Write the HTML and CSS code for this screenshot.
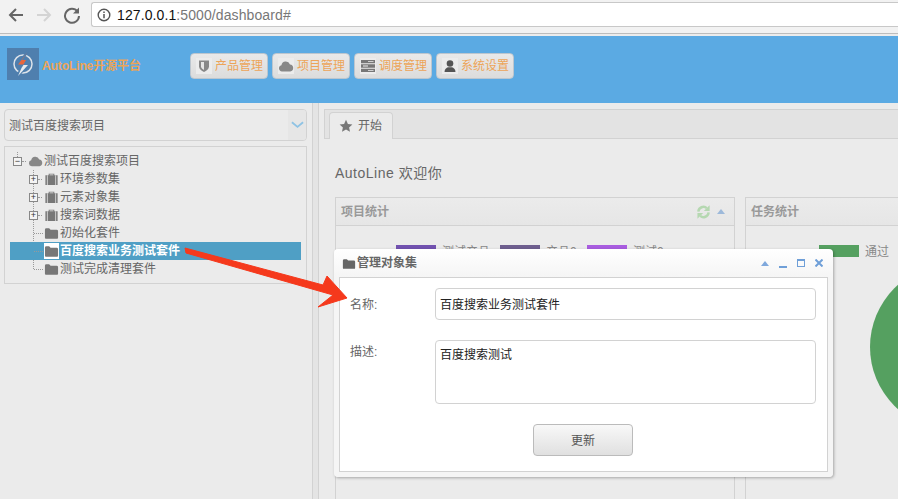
FILE: index.html
```html
<!DOCTYPE html>
<html lang="en">
<head>
    <meta charset="UTF-8">
    <meta name="viewport" content="width=device-width, initial-scale=1.0">
    <title>AutoLine</title>
    <link rel="stylesheet" href="styles.css">
</head>
<body>
    <div class="browser-bar">
        <svg class="nav-icon" viewBox="0 0 18 18"><path d="M16 9H3M9 3L3 9l6 6" fill="none" stroke="#666" stroke-width="2"/></svg>
        <svg class="nav-icon" viewBox="0 0 18 18"><path d="M2 9h13M9 3l6 6-6 6" fill="none" stroke="#d4d4d4" stroke-width="2"/></svg>
        <svg class="nav-icon" viewBox="0 0 18 18"><path d="M14.500 5.500A7 7 0 1 0 16 10" fill="none" stroke="#666" stroke-width="2"/><path d="M16 1.500v6h-6z" fill="#666"/></svg>
        <div class="address">
            <svg class="info-icon" viewBox="0 0 14 14"><circle cx="7" cy="7" r="5.800" fill="none" stroke="#555" stroke-width="1.400"/><path d="M7 6v4.200M7 3.500v1.400" stroke="#555" stroke-width="1.500"/></svg>
            <span class="host">127.0.0.1</span><span class="path">:5000/dashboard#</span>
        </div>
    </div>

    <header class="top-bar">
        <div class="logo">
            <svg viewBox="0 0 32 32" width="32" height="32"><circle cx="16" cy="16" r="9" fill="none" stroke="#dde3ea" stroke-width="1.500"/><path d="M21 3L10 17h6l3-5h-4z" fill="#4f7fae" stroke="#4f7fae" stroke-width="2"/><path d="M16 16h6L10 29l4-9z" fill="#4f7fae" stroke="#4f7fae" stroke-width="2"/><path d="M20.500 4L11 16.500h5.500l2.500-4.500h-4z" fill="#e8663c"/><path d="M16.500 17H21L11 28l3.500-8z" fill="#e6ebf0"/></svg>
        </div>
        <div class="brand">AutoLine开源平台</div>
        <nav class="menu">
            <a class="menu-btn" href="#"><span class="menu-icon"><svg viewBox="0 0 14 14" width="14" height="14"><path d="M2 1.500h10v6c0 2.500-2.500 4.500-5 5.500-2.500-1-5-3-5-5.500z" fill="#888"/><path d="M7 3v8c-1.500-.7-3-2-3-3.700V3z" fill="#e6e6e6"/></svg></span><span class="txt">产品管理</span></a>
            <a class="menu-btn" href="#"><span class="menu-icon"><svg viewBox="0 0 16 14" width="16" height="14"><path d="M4 12.500a3.200 3.200 0 0 1-.6-6.300A4.500 4.500 0 0 1 12 5.400a3.600 3.600 0 0 1 .3 7.100z" fill="#888"/></svg></span><span class="txt">项目管理</span></a>
            <a class="menu-btn" href="#"><span class="menu-icon"><svg viewBox="0 0 14 14" width="14" height="14"><path d="M0 1h14v3.300H0zM0 5.300h14v3.400H0zM0 9.700h14V13H0z" fill="#777"/><path d="M7 2.300h5.500v.8H7zM2 6.600h5v.8H2zM7 11h5.500v.8H7z" fill="#eee"/></svg></span><span class="txt">调度管理</span></a>
            <a class="menu-btn" href="#"><span class="menu-icon"><svg viewBox="0 0 14 14" width="14" height="14"><circle cx="7" cy="4.500" r="3.300" fill="#555"/><path d="M1.500 13c0-3 2-4.500 3.500-4.800h4c1.500.3 3.500 1.800 3.500 4.800z" fill="#555"/></svg></span><span class="txt">系统设置</span></a>
        </nav>
    </header>

    <div class="workspace">
        <aside class="sidebar">
            <div class="project-select">
                <span class="project-name">测试百度搜索项目</span>
                <span class="select-arrow"><svg viewBox="0 0 14 8" width="13" height="8"><path d="M1 1l6 5 6-5" fill="none" stroke="#8fc3e4" stroke-width="2"/></svg></span>
            </div>
            <div class="tree">
                <div class="tree-row root">
                    <span class="toggle open">−</span><span class="dots"></span>
                    <svg class="tree-icon" viewBox="0 0 16 14"><path d="M4 12.500a3.200 3.200 0 0 1-.6-6.300A4.500 4.500 0 0 1 12 5.400a3.600 3.600 0 0 1 .3 7.100z" fill="#888"/></svg>
                    <span class="txt">测试百度搜索项目</span>
                </div>
                <div class="tree-children">
                    <div class="tree-row">
                        <span class="toggle">+</span><span class="dots"></span>
                        <svg class="tree-icon" viewBox="0 0 16 14"><path d="M5 3V1.500h6V3h3.500v10.500h-13V3zM6 3h4V2.300H6z" fill="#777" fill-rule="evenodd"/><path d="M3.600 3v10.500M12.400 3v10.500" stroke="#ebebeb" stroke-width=".8"/></svg>
                        <span class="txt">环境参数集</span>
                    </div>
                    <div class="tree-row">
                        <span class="toggle">+</span><span class="dots"></span>
                        <svg class="tree-icon" viewBox="0 0 16 14"><path d="M5 3V1.500h6V3h3.500v10.500h-13V3zM6 3h4V2.300H6z" fill="#777" fill-rule="evenodd"/><path d="M3.600 3v10.500M12.400 3v10.500" stroke="#ebebeb" stroke-width=".8"/></svg>
                        <span class="txt">元素对象集</span>
                    </div>
                    <div class="tree-row">
                        <span class="toggle">+</span><span class="dots"></span>
                        <svg class="tree-icon" viewBox="0 0 16 14"><path d="M5 3V1.500h6V3h3.500v10.500h-13V3zM6 3h4V2.300H6z" fill="#777" fill-rule="evenodd"/><path d="M3.600 3v10.500M12.400 3v10.500" stroke="#ebebeb" stroke-width=".8"/></svg>
                        <span class="txt">搜索词数据</span>
                    </div>
                    <div class="tree-row leaf">
                        <span class="dots"></span>
                        <svg class="tree-icon" viewBox="0 0 16 14"><path d="M1 3.500A1.500 1.500 0 0 1 2.500 2h3L7 3.500h6.500A1.500 1.500 0 0 1 15 5v7a1 1 0 0 1-1 1H2a1 1 0 0 1-1-1z" fill="#777"/></svg>
                        <span class="txt">初始化套件</span>
                    </div>
                    <div class="tree-row leaf selected">
                        <span class="dots"></span>
                        <span class="icon-box"><svg class="tree-icon" viewBox="0 0 16 14"><path d="M1 3.500A1.500 1.500 0 0 1 2.500 2h3L7 3.500h6.500A1.500 1.500 0 0 1 15 5v7a1 1 0 0 1-1 1H2a1 1 0 0 1-1-1z" fill="#777"/></svg></span>
                        <span class="txt">百度搜索业务测试套件</span>
                    </div>
                    <div class="tree-row leaf">
                        <span class="dots"></span>
                        <svg class="tree-icon" viewBox="0 0 16 14"><path d="M1 3.500A1.500 1.500 0 0 1 2.500 2h3L7 3.500h6.500A1.500 1.500 0 0 1 15 5v7a1 1 0 0 1-1 1H2a1 1 0 0 1-1-1z" fill="#777"/></svg>
                        <span class="txt">测试完成清理套件</span>
                    </div>
                </div>
            </div>
        </aside>

        <div class="splitter"></div>

        <main class="content">
            <div class="tabs">
                <div class="tab">
                    <svg viewBox="0 0 14 14" width="14" height="14"><path d="M7 .8l1.900 4.100 4.500.5-3.300 3 .9 4.400L7 10.600l-4 2.200.9-4.400-3.300-3 4.500-.5z" fill="#777"/></svg>
                    <span class="txt">开始</span>
                </div>
            </div>
            <div class="tab-body">
                <h2 class="welcome">AutoLine 欢迎你</h2>
                <div class="panels">
                    <section class="panel stats-project">
                        <div class="panel-head">
                            <span class="txt">项目统计</span>
                            <span class="panel-tools">
                                <svg viewBox="0 0 16 16" width="15" height="16"><path d="M2.500 7.500A5.500 5.500 0 0 1 11.500 3.800" fill="none" stroke="#b5d8b1" stroke-width="2.600"/><path d="M14.500 .8v6.200H8.300z" fill="#b5d8b1"/><path d="M13.500 8.500A5.500 5.500 0 0 1 4.500 12.200" fill="none" stroke="#b5d8b1" stroke-width="2.600"/><path d="M1.500 15.200V9h6.200z" fill="#b5d8b1"/></svg>
                                <i class="caret-up"></i>
                            </span>
                        </div>
                        <div class="legend">
                            <i class="swatch purple"></i><span class="legend-text">测试产品</span>
                            <i class="swatch slate"></i><span class="legend-text short">产品0</span>
                            <i class="swatch violet"></i><span class="legend-text">测试0</span>
                        </div>
                    </section>
                    <section class="panel stats-task">
                        <div class="panel-head"><span class="txt">任务统计</span></div>
                        <div class="legend task-legend">
                            <i class="swatch green"></i><span class="legend-text">通过</span>
                        </div>
                        <div class="pie"></div>
                    </section>
                </div>
            </div>
        </main>
    </div>

    <div class="dialog">
        <div class="dialog-head">
            <svg viewBox="0 0 16 14" width="14" height="13"><path d="M1 3.500A1.500 1.500 0 0 1 2.500 2h3L7 3.500h6.500A1.500 1.500 0 0 1 15 5v7a1 1 0 0 1-1 1H2a1 1 0 0 1-1-1z" fill="#666"/></svg>
            <span class="dialog-title txt">管理对象集</span>
            <span class="dialog-tools">
                <i class="caret-up"></i>
                <i class="tool-min"></i>
                <i class="tool-max"></i>
                <svg viewBox="0 0 8 8" width="8" height="8"><path d="M.5 .5l7 7M7.500 .5l-7 7" stroke="#6f9fd8" stroke-width="2"/></svg>
            </span>
        </div>
        <form class="dialog-body">
            <div class="field">
                <label class="field-label" for="obj-name">名称:</label>
                <input class="field-input" id="obj-name" type="text" value="百度搜索业务测试套件">
            </div>
            <div class="field">
                <label class="field-label label-top" for="obj-desc">描述:</label>
                <textarea class="field-input field-area" id="obj-desc">百度搜索测试</textarea>
            </div>
            <div class="actions"><button class="update-btn" type="button">更新</button></div>
        </form>
    </div>

    <svg class="callout" viewBox="0 0 898 499"><path d="M185 248L186 253 333 295 318 307 347 298 327 276 323 285z" fill="#f5391c" stroke="#f5391c" stroke-width="1" stroke-linejoin="round"/></svg>
</body>
</html>
```

FILE: styles.css
```css
* {
    box-sizing: border-box;
}
body {
    margin: 0;
    width: 898px;
    height: 499px;
    overflow: hidden;
    background-color: #ebebeb;
    font-family: "Liberation Sans", "Noto Sans CJK SC", sans-serif;
    font-size: 12px;
    color: #666;
}
/* the CJK face sits low in its line box, this lifts it back to the row centre */
.txt {
    margin-bottom: 3px;
}

/* browser chrome */
.browser-bar {
    height: 36px;
    padding: 2px 0 7px 7px;
    display: flex;
    align-items: center;
    gap: 10px;
    background-color: #f2f2f2;
    border-bottom: 2px solid #ececec;
    box-shadow: inset 0 -1px #bdbdbd;
}
.nav-icon {
    width: 18px;
    height: 18px;
    flex: none;
}
.address {
    flex: 1;
    height: 25px;
    padding-left: 5px;
    display: flex;
    align-items: center;
    background-color: #fff;
    border: 1px solid #c8c8c8;
    border-right: none;
    border-radius: 3px 0 0 3px;
    font-size: 14px;
    letter-spacing: 0.1px;
}
.info-icon {
    width: 14px;
    height: 14px;
    margin-right: 6px;
}
.host {
    color: #111;
}
.path {
    color: #777;
}

/* blue header */
.top-bar {
    height: 67px;
    padding: 12px 0 0 7px;
    display: flex;
    align-items: flex-start;
    background-color: #5baae3;
}
.logo {
    width: 32px;
    height: 32px;
    background-color: #4f7fae;
}
.brand {
    margin: 8px 0 0 3px;
    width: 148px;
    color: #eda458;
    font-size: 12px;
    font-weight: bold;
    letter-spacing: -0.1px;
}
.menu {
    margin-top: 5px;
    display: flex;
    gap: 4px;
}
.menu-btn {
    width: 78px;
    height: 26px;
    padding-left: 5px;
    display: flex;
    align-items: center;
    gap: 3px;
    background: linear-gradient(#e9e9e9, #dcdcdc);
    border: 1px solid #bcc6cf;
    border-radius: 4px;
    color: #eda458;
    text-decoration: none;
    white-space: nowrap;
}
.menu-icon {
    width: 16px;
    height: 16px;
    display: flex;
    align-items: center;
    justify-content: center;
    background-color: #ececec;
}

/* main layout */
.workspace {
    display: flex;
    height: 396px;
}
.sidebar {
    width: 312px;
    flex: none;
    padding: 6px 5px 0 4px;
}
.project-select {
    height: 32px;
    display: flex;
    align-items: center;
    justify-content: space-between;
    background-color: #ebebeb;
    border: 1px solid #d2d2d2;
    border-radius: 4px;
    overflow: hidden;
}
.project-name {
    padding-left: 4px;
    margin-bottom: 1px;
}
.select-arrow {
    width: 18px;
    height: 100%;
    display: flex;
    align-items: center;
    justify-content: center;
    background-color: #e6e6e6;
}
.tree {
    margin-top: 5px;
    height: 138px;
    padding: 5px 5px 0 5px;
    border: 1px solid #d2d2d2;
}
.tree-row {
    height: 18px;
    display: flex;
    align-items: center;
    white-space: nowrap;
}
.root {
    padding-left: 3px;
}
.tree-children {
    background-image: repeating-linear-gradient(#999 0 1px, transparent 1px 2px);
    background-repeat: no-repeat;
    background-position: 23px 0;
    background-size: 1px 100px;
}
.tree-children .tree-row {
    padding-left: 19px;
}
.toggle {
    width: 9px;
    height: 9px;
    flex: none;
    display: flex;
    align-items: center;
    justify-content: center;
    background-color: #f4f4f4;
    border: 1px solid #888;
    font-size: 9px;
    line-height: 1;
    color: #333;
}
.toggle.open {
    position: relative;
}
.toggle.open::before {
    content: "";
    position: absolute;
    left: 3px;
    top: -6px;
    height: 5px;
    border-left: 1px dotted #999;
}
.dots {
    width: 4px;
    flex: none;
    margin-right: 2px;
    border-top: 1px dotted #999;
}
.tree-row.leaf {
    padding-left: 24px;
}
.tree-row.leaf .dots {
    width: 9px;
    margin-right: 1px;
}
.tree-icon {
    width: 15px;
    height: 14px;
    flex: none;
    margin-right: 1px;
}
.selected {
    background-color: #4f9fc5;
    color: #fff;
    font-weight: bold;
}
.icon-box {
    width: 15px;
    height: 16px;
    margin-right: 1px;
    display: flex;
    align-items: center;
    background-color: #fff;
}
.splitter {
    width: 7px;
    flex: none;
    background-color: #e4e4e4;
    border-left: 1px solid #d2d2d2;
    border-right: 1px solid #d2d2d2;
}
.content {
    flex: 1;
    min-width: 0;
    padding: 6px 0 0 5px;
}
.tabs {
    height: 30px;
    padding: 2px 0 0 4px;
    background-color: #e3e3e3;
    border: 1px solid #d2d2d2;
    border-right: none;
}
.tab {
    width: 64px;
    height: 27px;
    padding-left: 9px;
    display: flex;
    align-items: center;
    gap: 5px;
    background-color: #ebebeb;
    border: 1px solid #d2d2d2;
    border-bottom: none;
    border-radius: 4px 4px 0 0;
}
.tab-body {
    padding-left: 11px;
}
.welcome {
    margin: 25px 0 15px;
    height: 18px;
    font-size: 14px;
    font-weight: normal;
    line-height: 18px;
    letter-spacing: 0.5px;
    color: #666;
}
.panels {
    display: flex;
    gap: 10px;
}
.panel {
    height: 310px;
    border: 1px solid #d2d2d2;
    overflow: hidden;
}
.stats-project {
    width: 400px;
    flex: none;
}
.stats-task {
    flex: 1;
    min-width: 0;
    border-right: none;
}
.panel-head {
    height: 28px;
    padding: 0 5px;
    display: flex;
    align-items: center;
    justify-content: space-between;
    background: linear-gradient(#ebebeb, #e6e6e6);
    border-bottom: 1px solid #d2d2d2;
    color: #999;
    font-weight: bold;
}
.panel-tools {
    display: flex;
    align-items: center;
    gap: 6px;
    padding-right: 4px;
}
.caret-up {
    width: 0;
    height: 0;
    border-left: 4px solid transparent;
    border-right: 4px solid transparent;
    border-bottom: 5px solid #9db9da;
}
.legend {
    padding: 19px 0 0 60px;
    display: flex;
    align-items: flex-start;
}
.swatch {
    width: 40px;
    height: 12px;
    flex: none;
}
.purple { background-color: #7252b0; }
.slate { background-color: #6f5f8f; }
.violet { background-color: #a95de0; }
.green { background-color: #55a060; }
.legend-text {
    width: 64px;
    flex: none;
    padding-left: 6px;
    margin-top: -3px;
    white-space: nowrap;
    color: #888;
}
.short {
    width: 47px;
}
.task-legend {
    padding-left: 73px;
}
.pie {
    width: 166px;
    height: 166px;
    margin: 5px 0 0 124px;
    border-radius: 50%;
    background-color: #55a060;
}

/* dialog */
.dialog {
    position: absolute;
    left: 334px;
    top: 249px;
    width: 499px;
    height: 228px;
    padding: 0 5px 5px 5px;
    display: flex;
    flex-direction: column;
    background: linear-gradient(#fff, #f5f5f5 28px);
    border-radius: 4px;
    box-shadow: 1px 1px 3px rgba(0,0,0,0.3);
}
.dialog-head {
    height: 28px;
    flex: none;
    display: flex;
    align-items: center;
    padding-left: 3px;
}
.dialog-title {
    margin-left: 1px;
    color: #666;
    font-weight: bold;
}
.dialog-tools {
    margin-left: auto;
    padding-right: 5px;
    display: flex;
    align-items: center;
    gap: 10px;
}
.dialog-tools .caret-up {
    border-bottom-color: #7fa8dc;
}
.tool-min {
    width: 8px;
    height: 2px;
    margin-top: 7px;
    background-color: #6f9fd8;
}
.tool-max {
    width: 8px;
    height: 8px;
    border: 1px solid #6f9fd8;
    border-top-width: 2px;
}
.dialog-body {
    flex: 1;
    padding: 10px 10px 0;
    padding-right: 11px;
    background-color: #fff;
    border: 1px solid #d2d2d2;
}
.field {
    display: flex;
    margin-bottom: 20px;
}
.field-label {
    width: 85px;
    flex: none;
    padding-top: 7px;
    color: #666;
}
.label-top {
    padding-top: 2px;
}
.field-input {
    flex: 1;
    min-width: 0;
    height: 32px;
    padding: 0 4px 2px;
    background-color: #fff;
    border: 1px solid #d2d2d2;
    border-radius: 4px;
    font: inherit;
    color: #222;
}
.field-area {
    height: 64px;
    padding: 4px;
    resize: none;
}
.actions {
    display: flex;
    justify-content: center;
}
.update-btn {
    width: 100px;
    height: 32px;
    padding-bottom: 3px;
    background: linear-gradient(#f8f8f8, #e0e0e0);
    border: 1px solid #bbb;
    border-radius: 4px;
    font: inherit;
    color: #555;
}

/* annotation arrow drawn over the screenshot */
.callout {
    position: absolute;
    left: 0;
    top: 0;
    width: 898px;
    height: 499px;
    pointer-events: none;
}
```
